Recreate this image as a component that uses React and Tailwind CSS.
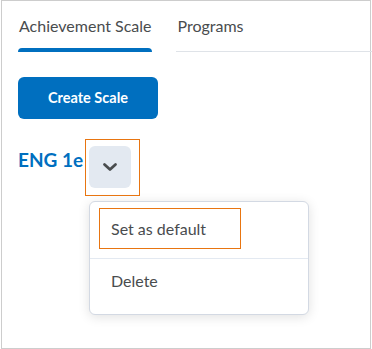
import { useState } from 'react';

const tabs = ['Achievement Scale', 'Programs'];

const App = () => {
  const [active, setActive] = useState(0);

  return (
    <div className="pl-[1px] bg-white" style={{ fontFamily: 'Lato, "Noto Sans", sans-serif' }}>
      <div className="w-[370px] h-[349px] border border-[#cdcdcd] text-[#494c4e]">
        {/* tabs */}
        <div className="flex ml-4 mr-[-2px] pt-[13px]">
          {tabs.map((tab, i) => (
            <div
              key={tab}
              className={`flex flex-col cursor-pointer ${i === 0 ? 'mr-6' : 'flex-1 border-b border-[#dfe3e8]'}`}
              onClick={() => setActive(i)}
            >
              <div className="text-[16px] leading-[24px] px-[1px]">{tab}</div>
              {i === 0 ? (
                <div className={`mt-[10px] h-[4px] rounded-t-[4px] ${active === i ? 'bg-[#006fbf]' : 'bg-transparent'}`} />
              ) : (
                <div className="mt-[10px] h-[3px]" />
              )}
            </div>
          ))}
        </div>

        <div className="pl-4 pt-[25px]">
          <button className="w-[140px] h-[42px] rounded-[6px] bg-[#006fbf] text-white text-[14.5px] font-bold">
            Create Scale
          </button>

          <div className="flex items-start mt-[20px]">
            <div className="w-[67px] shrink-0 whitespace-nowrap text-[19px] font-bold text-[#006fbf] leading-[24px] mt-[9px]">ENG 1e</div>
            <div className="border border-solid border-[#e87511] pl-[3px] pt-[6px] pr-[8px] pb-[7px]">
              <button className="w-[42px] h-[42px] rounded-[6px] bg-[#e3e9f1] flex items-center justify-center">
                <svg width="16" height="10" viewBox="0 0 16 10" fill="none">
                  <path d="M2.5 2.5l5.5 5 5.5-5" stroke="#494c4e" strokeWidth="2.8" strokeLinecap="round" strokeLinejoin="round" />
                </svg>
              </button>
            </div>
          </div>

          <div className="ml-[71px] mt-[5px] w-[220px] h-[114px] rounded-[6px] border border-[#d3d9e3] bg-white shadow-[0_2px_12px_rgba(0,0,0,0.12)]">
            <div className="h-[56px] pl-[9px] pt-[6px]">
              <div className="w-[142px] h-[41px] border border-[#e87511] pl-[11px] flex items-center text-[16px]">
                Set as default
              </div>
            </div>
            <div className="h-px bg-[#e3e9f1]" />
            <div className="pl-[21px] pt-[10px] text-[16px] leading-[24px]">Delete</div>
          </div>
        </div>
      </div>
    </div>
  );
};

export default App;
